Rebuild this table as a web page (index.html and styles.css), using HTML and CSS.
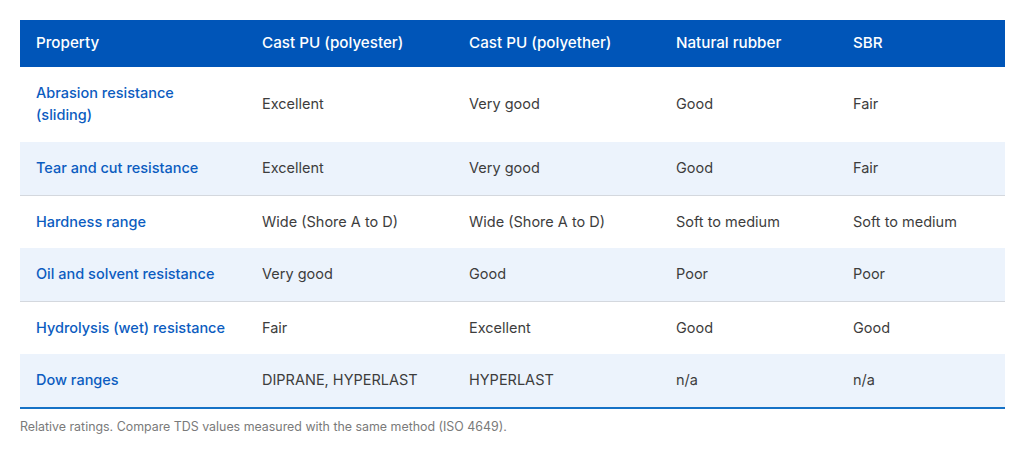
FILE: index.html
```html
<!DOCTYPE html>
<html lang="en">
<head>
<meta charset="utf-8">
<title>Material comparison</title>
<link rel="stylesheet" href="styles.css">
</head>
<body>
<div class="wrap">
  <table class="cmp">
    <colgroup>
      <col class="c1"><col class="c2"><col class="c3"><col class="c4"><col class="c5">
    </colgroup>
    <thead>
      <tr><th>Property</th><th>Cast PU (polyester)</th><th>Cast PU (polyether)</th><th>Natural rubber</th><th>SBR</th></tr>
    </thead>
    <tbody>
      <tr class="first"><td class="prop">Abrasion resistance<br>(sliding)</td><td>Excellent</td><td>Very good</td><td>Good</td><td>Fair</td></tr>
      <tr class="alt"><td class="prop">Tear and cut resistance</td><td>Excellent</td><td>Very good</td><td>Good</td><td>Fair</td></tr>
      <tr><td class="prop">Hardness range</td><td>Wide (Shore A to D)</td><td>Wide (Shore A to D)</td><td>Soft to medium</td><td>Soft to medium</td></tr>
      <tr class="alt"><td class="prop">Oil and solvent resistance</td><td>Very good</td><td>Good</td><td>Poor</td><td>Poor</td></tr>
      <tr><td class="prop">Hydrolysis (wet) resistance</td><td>Fair</td><td>Excellent</td><td>Good</td><td>Good</td></tr>
      <tr class="alt last"><td class="prop">Dow ranges</td><td>DIPRANE, HYPERLAST</td><td>HYPERLAST</td><td>n/a</td><td>n/a</td></tr>
    </tbody>
  </table>
  <p class="note">Relative ratings. Compare TDS values measured with the same method (ISO 4649).</p>
</div>
</body>
</html>
```
FILE: styles.css
```css
html, body {
  margin: 0;
  padding: 0;
  background: #ffffff;
}
body {
  font-family: "Inter", "Noto Sans", sans-serif;
  color: #3d3d3d;
}
.wrap {
  padding: 20px 19px 0 20px;
}
.cmp {
  width: 985px;
  border-collapse: collapse;
  table-layout: fixed;
  font-size: 14.5px;
  line-height: 22px;
}
.c1 { width: 226px; }
.c2 { width: 207px; }
.c3 { width: 207px; }
.c4 { width: 177px; }
.c5 { width: 168px; }
.cmp th {
  background: #0055b8;
  color: #ffffff;
  font-size: 15.2px;
  font-weight: 500;
  text-align: left;
  padding: 12px 16px 13px;
}
.cmp td {
  padding: 15px 16px 15px;
  vertical-align: middle;
  font-weight: 400;
}
.cmp tr.first td {
  padding-bottom: 16px;
}
.cmp td.prop {
  color: #0b5cc0;
  font-weight: 500;
}
.cmp tr.alt td {
  background: #ecf3fc;
  border-bottom: 1px solid #d4d8de;
  padding-bottom: 16px;
}
.cmp tr.last td {
  border-bottom: 2px solid #1672c6;
}
.note {
  margin: 10px 0 0 0;
  font-size: 12.4px;
  line-height: 16px;
  color: #7a7a7a;
}
```
